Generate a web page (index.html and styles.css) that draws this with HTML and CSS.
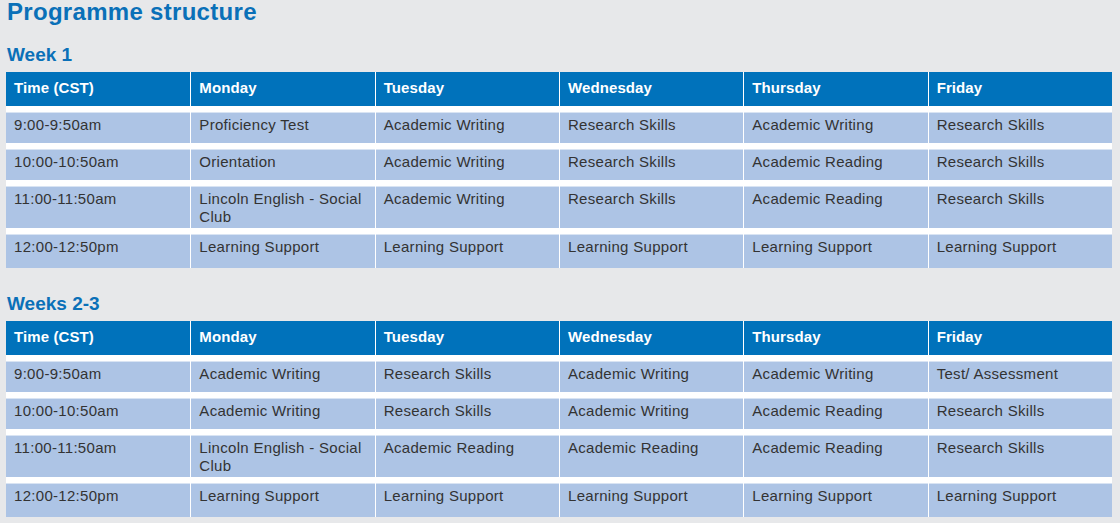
FILE: index.html
```html
<!DOCTYPE html>
<html lang="en">
<head>
<meta charset="utf-8">
<title>Programme structure</title>
<link rel="stylesheet" href="styles.css">
</head>
<body>
<main class="page">
  <h1 class="title">Programme structure</h1>

  <section class="week">
    <h2 class="week-title">Week 1</h2>
    <table class="schedule">
      <thead>
        <tr><th>Time (CST)</th><th>Monday</th><th>Tuesday</th><th>Wednesday</th><th>Thursday</th><th>Friday</th></tr>
      </thead>
      <tbody>
        <tr><td>9:00-9:50am</td><td>Proficiency Test</td><td>Academic Writing</td><td>Research Skills</td><td>Academic Writing</td><td>Research Skills</td></tr>
        <tr><td>10:00-10:50am</td><td>Orientation</td><td>Academic Writing</td><td>Research Skills</td><td>Academic Reading</td><td>Research Skills</td></tr>
        <tr class="tall"><td>11:00-11:50am</td><td>Lincoln English - Social Club</td><td>Academic Writing</td><td>Research Skills</td><td>Academic Reading</td><td>Research Skills</td></tr>
        <tr class="last"><td>12:00-12:50pm</td><td>Learning Support</td><td>Learning Support</td><td>Learning Support</td><td>Learning Support</td><td>Learning Support</td></tr>
      </tbody>
    </table>
  </section>

  <section class="week week-next">
    <h2 class="week-title">Weeks 2-3</h2>
    <table class="schedule">
      <thead>
        <tr><th>Time (CST)</th><th>Monday</th><th>Tuesday</th><th>Wednesday</th><th>Thursday</th><th>Friday</th></tr>
      </thead>
      <tbody>
        <tr><td>9:00-9:50am</td><td>Academic Writing</td><td>Research Skills</td><td>Academic Writing</td><td>Academic Writing</td><td>Test/ Assessment</td></tr>
        <tr><td>10:00-10:50am</td><td>Academic Writing</td><td>Research Skills</td><td>Academic Writing</td><td>Academic Reading</td><td>Research Skills</td></tr>
        <tr class="tall"><td>11:00-11:50am</td><td>Lincoln English - Social Club</td><td>Academic Reading</td><td>Academic Reading</td><td>Academic Reading</td><td>Research Skills</td></tr>
        <tr class="last"><td>12:00-12:50pm</td><td>Learning Support</td><td>Learning Support</td><td>Learning Support</td><td>Learning Support</td><td>Learning Support</td></tr>
      </tbody>
    </table>
  </section>
</main>
</body>
</html>
```

FILE: styles.css
```css
html, body {
  margin: 0;
  padding: 0;
  background: #e7e8ea;
}

body {
  font-family: "Liberation Sans", Arial, sans-serif;
  overflow: hidden;
}

.page {
  padding: 0 8px 0 6px;
}

.title {
  margin: 0;
  font-size: 24px;
  line-height: 24px;
  font-weight: bold;
  color: #0a70b8;
  letter-spacing: 0.3px;
  padding-left: 1px;
}

.week {
  margin-top: 20px;
}

.week-next {
  margin-top: 25px;
}

.week-title {
  margin: 0 0 6px 0;
  font-size: 19px;
  line-height: 22px;
  font-weight: bold;
  color: #0a70b8;
  padding-left: 1px;
}

.schedule {
  width: 1106px;
  table-layout: fixed;
  border-collapse: separate;
  border-spacing: 0;
}

.schedule thead tr {
  height: 34px;
}

.schedule tbody tr {
  height: 37px;
}

.schedule tbody tr.tall {
  height: 48px;
}

.schedule tbody tr.last {
  height: 40px;
}

.schedule th {
  background: #0072bb;
  color: #ffffff;
  font-size: 15px;
  line-height: 18px;
  font-weight: bold;
  text-align: left;
  vertical-align: top;
  padding: 7px 8px 0 8px;
  border-left: 1px solid #ffffff;
  letter-spacing: 0.1px;
}

.schedule td {
  background: #adc4e5;
  color: #333333;
  font-size: 15px;
  line-height: 18px;
  text-align: left;
  vertical-align: top;
  padding: 4px 8px 0 8px;
  border-top: 6px solid #ffffff;
  border-left: 1px solid #ffffff;
  box-shadow: inset 0 1px 0 #d9e4f3;
  letter-spacing: 0.3px;
}

.schedule th:first-child,
.schedule td:first-child {
  border-left: none;
}
```
